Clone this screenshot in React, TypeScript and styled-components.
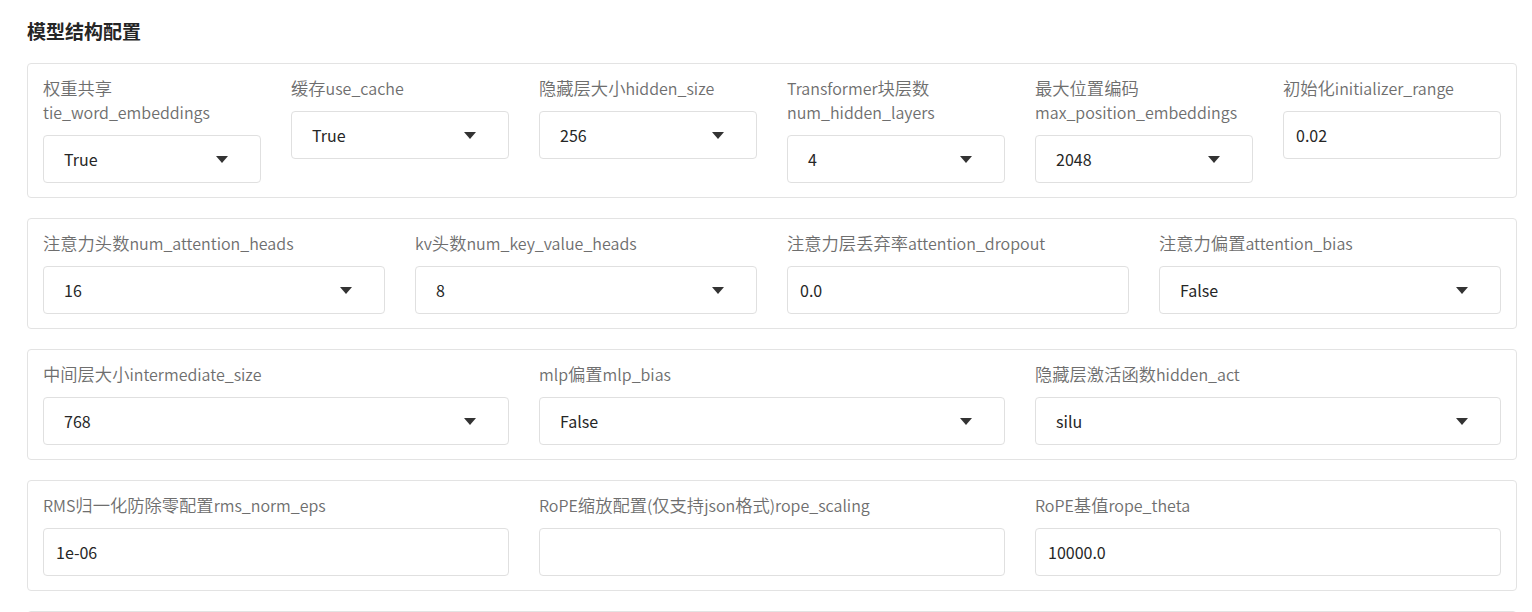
import React from 'react';
import styled, { createGlobalStyle } from 'styled-components';

type Field = {
    label: string[];
    value: string;
    kind: 'select' | 'input';
};

const rows: Field[][] = [
    [
        { label: ['权重共享', 'tie_word_embeddings'], value: 'True', kind: 'select' },
        { label: ['缓存use_cache'], value: 'True', kind: 'select' },
        { label: ['隐藏层大小hidden_size'], value: '256', kind: 'select' },
        { label: ['Transformer块层数', 'num_hidden_layers'], value: '4', kind: 'select' },
        { label: ['最大位置编码', 'max_position_embeddings'], value: '2048', kind: 'select' },
        { label: ['初始化initializer_range'], value: '0.02', kind: 'input' },
    ],
    [
        { label: ['注意力头数num_attention_heads'], value: '16', kind: 'select' },
        { label: ['kv头数num_key_value_heads'], value: '8', kind: 'select' },
        { label: ['注意力层丢弃率attention_dropout'], value: '0.0', kind: 'input' },
        { label: ['注意力偏置attention_bias'], value: 'False', kind: 'select' },
    ],
    [
        { label: ['中间层大小intermediate_size'], value: '768', kind: 'select' },
        { label: ['mlp偏置mlp_bias'], value: 'False', kind: 'select' },
        { label: ['隐藏层激活函数hidden_act'], value: 'silu', kind: 'select' },
    ],
    [
        { label: ['RMS归一化防除零配置rms_norm_eps'], value: '1e-06', kind: 'input' },
        { label: ['RoPE缩放配置(仅支持json格式)rope_scaling'], value: '', kind: 'input' },
        { label: ['RoPE基值rope_theta'], value: '10000.0', kind: 'input' },
    ],
];

// chinese runs are drawn a bit larger than the latin ones, like the original page
const renderLine = (text: string) =>
    text.split(/([\u4e00-\u9fff]+)/).map((part, i) =>
        /[\u4e00-\u9fff]/.test(part) ? <Cjk key={i}>{part}</Cjk> : part
    );

const App: React.FC = () => {
    return (
        <Page>
            <GlobalStyle />
            <Title>模型结构配置</Title>
            {rows.map((row, i) => (
                <Panel key={i} $cols={row.length}>
                    {row.map((f, j) => (
                        <FieldBox key={j}>
                            <Label>
                                {f.label.map((line, k) => (
                                    <span key={k}>{renderLine(line)}</span>
                                ))}
                            </Label>
                            {f.kind === 'select' ? (
                                <SelectBox>
                                    <span>{f.value}</span>
                                    <Caret viewBox="0 0 12 7">
                                        <path d="M0 0 L12 0 L6 7 Z" fill="#333" />
                                    </Caret>
                                </SelectBox>
                            ) : (
                                <InputBox defaultValue={f.value} />
                            )}
                        </FieldBox>
                    ))}
                </Panel>
            ))}
            <Panel $cols={1} $empty />
        </Page>
    );
};

export default App;


const GlobalStyle = createGlobalStyle`
    html, body {
        margin: 0;
        padding: 0;
        background: #fff;
        overflow: hidden;
    }
    body {
        font-family: "Noto Sans CJK SC", "Noto Sans", sans-serif;
    }
`;

const Page = styled.div`
    padding: 18px 15px 0 27px;
    display: flex;
    flex-direction: column;
    gap: 20px;
`;

const Title = styled.h2`
    margin: 0 0 -1px;
    font-size: 19px;
    line-height: 26px;
    font-weight: 700;
    color: #262626;
`;

const Panel = styled.div<{ $cols: number; $empty?: boolean }>`
    display: grid;
    grid-template-columns: repeat(${(p) => p.$cols}, 1fr);
    column-gap: 30px;
    padding: 12px 15px 14px;
    border: 1px solid #e3e3e3;
    border-radius: 4px;
    min-height: ${(p) => (p.$empty ? '80px' : 'auto')};
`;

const FieldBox = styled.div`
    display: flex;
    flex-direction: column;
    gap: 11px;
    min-width: 0;
`;

const Label = styled.div`
    display: flex;
    flex-direction: column;
    font-size: 16px;
    line-height: 24px;
    font-weight: 350;
    color: #6e6e6e;
    white-space: nowrap;

    span {
        height: 24px;
    }
`;

const Cjk = styled.span`
    font-size: 17.3px;
    line-height: 24px;
`;

const SelectBox = styled.div`
    box-sizing: border-box;
    height: 48px;
    display: flex;
    align-items: center;
    justify-content: space-between;
    padding: 0 32px 0 20px;
    border: 1px solid #e0e0e0;
    border-radius: 4px;
    font-size: 16px;
    color: #262626;
    background: #fff;
`;

const Caret = styled.svg`
    width: 12px;
    height: 7px;
`;

const InputBox = styled.input`
    box-sizing: border-box;
    height: 48px;
    width: 100%;
    padding: 0 12px;
    border: 1px solid #e0e0e0;
    border-radius: 4px;
    font-family: "Noto Sans CJK SC", "Noto Sans", sans-serif;
    font-size: 16px;
    color: #262626;
    background: #fff;
    outline: none;
`;
